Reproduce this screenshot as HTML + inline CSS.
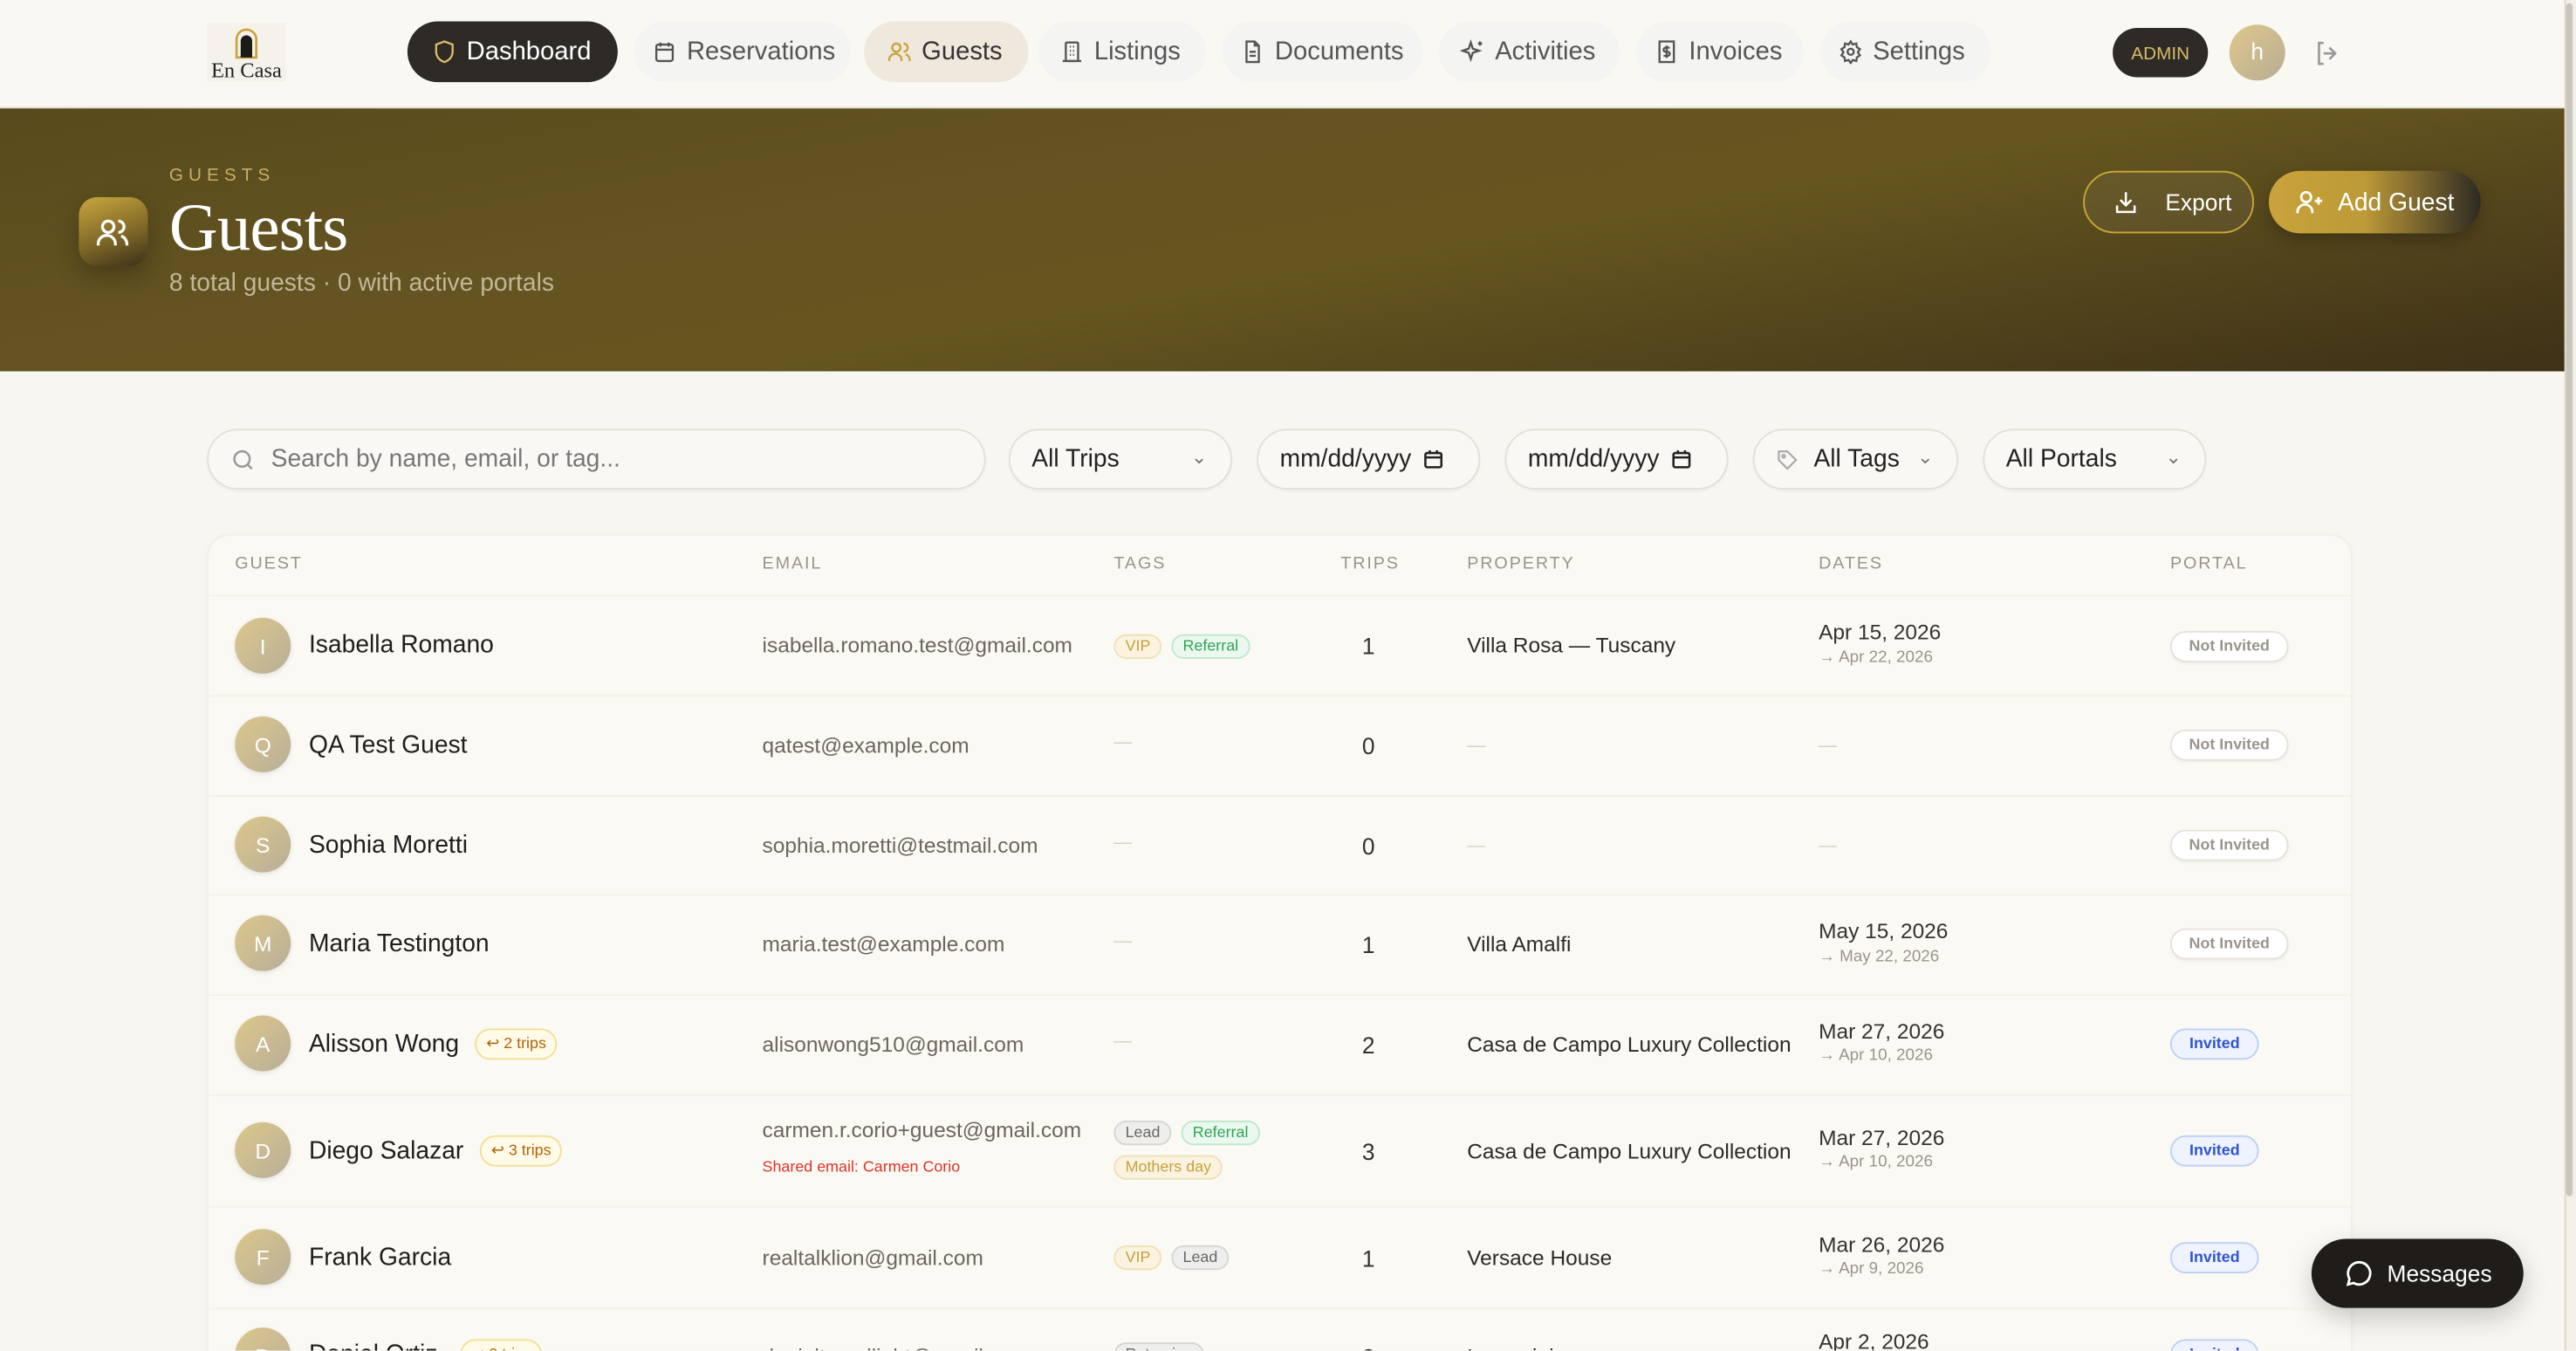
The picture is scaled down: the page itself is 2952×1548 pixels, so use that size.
<!DOCTYPE html>
<html><head><meta charset="utf-8">
<style>
*{box-sizing:border-box;margin:0;padding:0}
html,body{width:2952px;height:1548px;overflow:hidden;background:#f8f6f1}
#w{position:absolute;left:0;top:0;width:1568px;height:822px;transform:scale(1.88265);transform-origin:0 0;font-family:"Liberation Sans",sans-serif;color:#222;background:#f8f6f1;overflow:hidden}
.a{position:absolute}
.nav{left:0;top:0;width:1561px;height:66px;background:#faf8f3;border-bottom:1px solid #e6e0d2}
.pill{position:absolute;top:13px;height:37px;border-radius:19px;background:#f4f4f3;display:flex;align-items:center;padding-left:11px;font-size:15.5px;color:#555;gap:6px}
.pill svg{width:15px;height:15px;flex:none}
.hero{left:0;top:66px;width:1561px;height:160px;background:linear-gradient(170deg,#584a1c 0%,#645421 35%,#65561f 55%,#4f411b 80%,#3d3117 100%)}
.f{position:absolute;top:261px;height:37px;border:1px solid #e4e0d8;border-radius:19px;background:#faf8f4;box-shadow:0 1px 2px rgba(0,0,0,.04);font-size:15px;color:#222;display:flex;align-items:center;padding-left:13px}
.card{left:126px;top:325px;width:1306px;height:520px;background:#fbf9f3;border:1px solid #f2efe7;border-radius:14px;box-shadow:0 1px 4px rgba(0,0,0,.03)}
.th{position:absolute;top:337px;font-size:10.5px;letter-spacing:1px;color:#9a958c}
.row{position:absolute;left:127px;width:1304px;border-top:1px solid #f5f2ea}
.av{position:absolute;left:143px;width:34px;height:34px;border-radius:50%;background:linear-gradient(135deg,#dcc88a,#b8ae9a);color:#fff;font-size:13px;display:flex;align-items:center;justify-content:center;box-shadow:0 1px 3px rgba(0,0,0,.1)}
.nm{position:absolute;left:188px;font-size:15px;color:#1e1e1e}
.em{position:absolute;left:464px;font-size:13px;color:#6b665e}
.tr{position:absolute;left:816px;width:34px;text-align:center;font-size:14px;color:#333}
.pr{position:absolute;left:893px;font-size:13px;color:#2a2a2a}
.d1{position:absolute;left:1107px;font-size:13px;color:#333}
.d2{position:absolute;left:1107px;font-size:10px;color:#9a958c}
.dash{position:absolute;font-size:11px;color:#d4cfc4}
.tag{position:absolute;height:15px;border-radius:8px;font-size:9.5px;padding:0 6px;line-height:13px;border:1px solid}
.vip{background:#fbf3df;border-color:#f0e0b8;color:#c4a23c}
.ref{background:#eaf8ee;border-color:#bfe8cb;color:#2ea456}
.lead{background:#eeeeec;border-color:#d6d6d3;color:#666}
.md{background:#fbf3df;border-color:#f0e0b8;color:#c4a23c}
.ni{position:absolute;left:1321px;width:72px;height:19px;border-radius:10px;background:#fff;border:1px solid #e6e2da;font-size:9.5px;font-weight:bold;color:#9a958c;text-align:center;line-height:17px;box-shadow:0 1px 2px rgba(0,0,0,.05)}
.iv{position:absolute;left:1321px;width:54px;height:19px;border-radius:10px;background:#eef3ff;border:1px solid #bcd0f5;font-size:9.5px;font-weight:bold;color:#2f55d0;text-align:center;line-height:17px}
.trips{position:absolute;height:19px;border-radius:10px;background:#fffbe8;border:1px solid #f3df96;font-size:9.5px;color:#b2620a;padding:0 6px;line-height:17px}
</style></head><body><div id="w">

<div class="a nav"></div>
<div class="a" style="left:126px;top:14px;width:48px;height:36px;background:#f5f2ec"></div>
<svg class="a" style="left:142px;top:16px" width="16" height="20" viewBox="0 0 16 20"><path d="M2 19V8a6 6 0 0 1 12 0v11z" fill="none" stroke="#c9a23a" stroke-width="1.4"/><path d="M4.5 19V9a3.5 3.5 0 0 1 7 0v10z" fill="#1c1a17"/></svg>
<div class="a" style="left:126px;top:35px;width:48px;text-align:center;font-family:'Liberation Serif',serif;font-size:13px;color:#222">En Casa</div>

<div class="pill" style="left:248px;width:128px;background:#2e2a26;color:#fff;padding-left:15px"><svg viewBox="0 0 24 24" fill="none" stroke="#d9bb6a" stroke-width="2"><path d="M12 2l8 3v7c0 5-3.5 8.5-8 10-4.5-1.5-8-5-8-10V5z"/></svg>Dashboard</div>
<div class="pill" style="left:386px;width:132px"><svg viewBox="0 0 24 24" fill="none" stroke="#555" stroke-width="2"><rect x="4" y="5" width="16" height="16" rx="2"/><path d="M4 10h16M8 3v4M16 3v4"/></svg>Reservations</div>
<div class="pill" style="left:526px;width:100px;background:#efe8dc;color:#333;padding-left:14px"><svg viewBox="0 0 24 24" fill="none" stroke="#c9a23a" stroke-width="2"><circle cx="9" cy="8" r="4"/><path d="M2 21v-1a6 6 0 0 1 12 0v1M16 4a4 4 0 0 1 0 8M22 21v-1a6 6 0 0 0-4-5.6"/></svg>Guests</div>
<div class="pill" style="left:632px;width:102px;padding-left:13px"><svg viewBox="0 0 24 24" fill="none" stroke="#555" stroke-width="2"><rect x="6" y="3" width="12" height="18" rx="1"/><path d="M3 21h18M10 7h1M13 7h1M10 11h1M13 11h1M10 15h1M13 15h1"/></svg>Listings</div>
<div class="pill" style="left:744px;width:122px"><svg viewBox="0 0 24 24" fill="none" stroke="#555" stroke-width="2"><path d="M14 2H6v20h12V6z"/><path d="M14 2v4h4M9 12h6M9 16h6"/></svg>Documents</div>
<div class="pill" style="left:876px;width:110px;padding-left:13px"><svg viewBox="0 0 24 24" fill="none" stroke="#555" stroke-width="2"><path d="M10 3l2 6 6 2-6 2-2 6-2-6-6-2 6-2zM19 2v4M17 4h4"/></svg>Activities</div>
<div class="pill" style="left:996px;width:102px"><svg viewBox="0 0 24 24" fill="none" stroke="#555" stroke-width="2"><rect x="5" y="2" width="14" height="20"/><path d="M15 8h-4a2 2 0 0 0 0 4h2a2 2 0 0 1 0 4H9M12 6v12"/></svg>Invoices</div>
<div class="pill" style="left:1108px;width:104px"><svg viewBox="0 0 24 24" fill="none" stroke="#555" stroke-width="2"><circle cx="12" cy="12" r="3"/><path d="M12 2l2 3 3.5-1 .5 3.5 3 2-2 3 2 3-3 2-.5 3.5-3.5-1-2 3-2-3-3.5 1-.5-3.5-3-2 2-3-2-3 3-2L6.5 4 10 5z"/></svg>Settings</div>

<div class="a" style="left:1286px;top:17px;width:58px;height:30px;border-radius:15px;background:#2e2a26;color:#d9bb6a;font-size:11px;text-align:center;line-height:32px">ADMIN</div>
<div class="a" style="left:1357px;top:15px;width:34px;height:34px;border-radius:50%;background:linear-gradient(135deg,#dfc88a,#b8ad95);color:#fff;font-size:14px;text-align:center;line-height:32px">h</div>
<svg class="a" style="left:1408px;top:24px" width="17" height="17" viewBox="0 0 24 24" fill="none" stroke="#999" stroke-width="2"><path d="M9 3H5v18h4M14 7l5 5-5 5M19 12H9"/></svg>

<div class="a hero"></div>
<div class="a" style="left:48px;top:120px;width:42px;height:42px;border-radius:11px;background:linear-gradient(160deg,#c9a73e,#7a6326 60%,#3a301a);box-shadow:0 6px 14px rgba(0,0,0,.25)"></div>
<svg class="a" style="left:58px;top:131px" width="21" height="21" viewBox="0 0 24 24" fill="none" stroke="#fff" stroke-width="2"><circle cx="9" cy="8" r="4"/><path d="M2 21v-1a6 6 0 0 1 12 0v1M16 4a4 4 0 0 1 0 8M22 21v-1a6 6 0 0 0-4-5.6"/></svg>
<div class="a" style="left:103px;top:101px;font-size:11px;letter-spacing:3.2px;color:#c6ae6a">GUESTS</div>
<div class="a" style="left:103px;top:114px;font-family:'Liberation Serif',serif;font-size:41px;color:#fff;letter-spacing:-.5px">Guests</div>
<div class="a" style="left:103px;top:164px;font-size:15px;color:#c2b898">8 total guests · 0 with active portals</div>
<div class="a" style="left:1268px;top:104px;width:104px;height:38px;border-radius:19px;border:1.5px solid #c9a63a;background:rgba(255,255,255,.05);color:#fff;font-size:14px;display:flex;align-items:center;padding-left:17px;gap:16px"><svg width="16" height="16" viewBox="0 0 24 24" fill="none" stroke="#fff" stroke-width="2"><path d="M12 3v12M7 10l5 5 5-5M4 15v6h16v-6"/></svg>Export</div>
<div class="a" style="left:1381px;top:104px;width:129px;height:38px;border-radius:19px;background:linear-gradient(90deg,#c9a33a 0%,#bd9a38 45%,#2e2a22 100%);color:#fff;font-size:15px;display:flex;align-items:center;padding-left:16px;gap:8px;box-shadow:0 4px 10px rgba(0,0,0,.25)"><svg width="18" height="18" viewBox="0 0 24 24" fill="none" stroke="#fff" stroke-width="2"><circle cx="9" cy="8" r="4"/><path d="M2 21v-1a6 6 0 0 1 12 0v1M19 8v6M16 11h6"/></svg>Add Guest</div>

<div class="f" style="left:126px;width:474px;color:#777"><svg width="16" height="16" viewBox="0 0 24 24" fill="none" stroke="#999" stroke-width="2"><circle cx="11" cy="11" r="7"/><path d="M20 20l-4-4"/></svg><span style="margin-left:9px">Search by name, email, or tag...</span></div>
<div class="f" style="left:614px;width:136px">All Trips<span style="position:absolute;right:14px;top:9px;color:#777;font-size:12px">&#8964;</span></div>
<div class="f" style="left:765px;width:136px">mm/dd/yyyy<svg style="margin-left:7px" width="13" height="13" viewBox="0 0 24 24" fill="none" stroke="#222" stroke-width="2.5"><rect x="3" y="5" width="18" height="16" rx="2"/><path d="M3 10h18M8 2v4M16 2v4"/></svg></div>
<div class="f" style="left:916px;width:136px">mm/dd/yyyy<svg style="margin-left:7px" width="13" height="13" viewBox="0 0 24 24" fill="none" stroke="#222" stroke-width="2.5"><rect x="3" y="5" width="18" height="16" rx="2"/><path d="M3 10h18M8 2v4M16 2v4"/></svg></div>
<div class="f" style="left:1067px;width:125px"><svg width="14" height="14" viewBox="0 0 24 24" fill="none" stroke="#aaa" stroke-width="2"><path d="M3 3h9l9 9-9 9-9-9z"/><circle cx="8" cy="8" r="1.5"/></svg><span style="margin-left:9px">All Tags</span><span style="position:absolute;right:14px;top:9px;color:#777;font-size:12px">&#8964;</span></div>
<div class="f" style="left:1207px;width:136px">All Portals<span style="position:absolute;right:14px;top:9px;color:#777;font-size:12px">&#8964;</span></div>

<div class="a card"></div>
<div class="th" style="left:143px">GUEST</div><div class="th" style="left:464px">EMAIL</div><div class="th" style="left:678px">TAGS</div><div class="th" style="left:816px">TRIPS</div><div class="th" style="left:893px">PROPERTY</div><div class="th" style="left:1107px">DATES</div><div class="th" style="left:1321px">PORTAL</div>

<div class="row" style="top:362px"></div><div class="row" style="top:423px"></div><div class="row" style="top:484px"></div><div class="row" style="top:544px"></div><div class="row" style="top:605px"></div><div class="row" style="top:666px"></div><div class="row" style="top:734px"></div><div class="row" style="top:796px"></div>

<div class="av" style="top:376px">I</div><div class="nm" style="top:384px">Isabella Romano</div>
<div class="em" style="top:385px">isabella.romano.test@gmail.com</div>
<div class="tag vip" style="left:678px;top:386px">VIP</div><div class="tag ref" style="left:713px;top:386px">Referral</div>
<div class="tr" style="top:385px">1</div><div class="pr" style="top:385px">Villa Rosa — Tuscany</div>
<div class="d1" style="top:377px">Apr 15, 2026</div><div class="d2" style="top:395px">→ Apr 22, 2026</div>
<div class="ni" style="top:384px">Not Invited</div>

<div class="av" style="top:436px">Q</div><div class="nm" style="top:445px">QA Test Guest</div>
<div class="em" style="top:446px">qatest@example.com</div><div class="dash" style="left:678px;top:446px">—</div>
<div class="tr" style="top:446px">0</div><div class="dash" style="left:893px;top:448px">—</div><div class="dash" style="left:1107px;top:448px">—</div>
<div class="ni" style="top:444px">Not Invited</div>

<div class="av" style="top:497px">S</div><div class="nm" style="top:506px">Sophia Moretti</div>
<div class="em" style="top:507px">sophia.moretti@testmail.com</div><div class="dash" style="left:678px;top:507px">—</div>
<div class="tr" style="top:507px">0</div><div class="dash" style="left:893px;top:509px">—</div><div class="dash" style="left:1107px;top:509px">—</div>
<div class="ni" style="top:505px">Not Invited</div>

<div class="av" style="top:557px">M</div><div class="nm" style="top:566px">Maria Testington</div>
<div class="em" style="top:567px">maria.test@example.com</div><div class="dash" style="left:678px;top:567px">—</div>
<div class="tr" style="top:567px">1</div><div class="pr" style="top:567px">Villa Amalfi</div>
<div class="d1" style="top:559px">May 15, 2026</div><div class="d2" style="top:577px">→ May 22, 2026</div>
<div class="ni" style="top:565px">Not Invited</div>

<div class="av" style="top:618px">A</div><div class="nm" style="top:627px">Alisson Wong</div><div class="trips" style="left:289px;top:626px">↩ 2 trips</div>
<div class="em" style="top:628px">alisonwong510@gmail.com</div><div class="dash" style="left:678px;top:628px">—</div>
<div class="tr" style="top:628px">2</div><div class="pr" style="top:628px">Casa de Campo Luxury Collection</div>
<div class="d1" style="top:620px">Mar 27, 2026</div><div class="d2" style="top:637px">→ Apr 10, 2026</div>
<div class="iv" style="top:626px">Invited</div>

<div class="av" style="top:683px">D</div><div class="nm" style="top:692px">Diego Salazar</div><div class="trips" style="left:292px;top:691px">↩ 3 trips</div>
<div class="em" style="top:680px">carmen.r.corio+guest@gmail.com</div><div class="a" style="left:464px;top:705px;font-size:9.5px;color:#e0322c">Shared email: Carmen Corio</div>
<div class="tag lead" style="left:678px;top:682px">Lead</div><div class="tag ref" style="left:719px;top:682px">Referral</div><div class="tag md" style="left:678px;top:703px">Mothers day</div>
<div class="tr" style="top:693px">3</div><div class="pr" style="top:693px">Casa de Campo Luxury Collection</div>
<div class="d1" style="top:685px">Mar 27, 2026</div><div class="d2" style="top:702px">→ Apr 10, 2026</div>
<div class="iv" style="top:691px">Invited</div>

<div class="av" style="top:748px">F</div><div class="nm" style="top:757px">Frank Garcia</div>
<div class="em" style="top:758px">realtalklion@gmail.com</div>
<div class="tag vip" style="left:678px;top:758px">VIP</div><div class="tag lead" style="left:713px;top:758px">Lead</div>
<div class="tr" style="top:758px">1</div><div class="pr" style="top:758px">Versace House</div>
<div class="d1" style="top:750px">Mar 26, 2026</div><div class="d2" style="top:767px">→ Apr 9, 2026</div>
<div class="iv" style="top:756px">Invited</div>

<div class="av" style="top:808px">D</div><div class="nm" style="top:816px">Daniel Ortiz</div><div class="trips" style="left:280px;top:815px">↩ 2 trips</div>
<div class="em" style="top:818px">danieltravellight@gmail.com</div><div class="tag lead" style="left:678px;top:817px">Returning</div>
<div class="tr" style="top:818px">2</div><div class="pr" style="top:818px">Lorenzini</div>
<div class="d1" style="top:809px">Apr 2, 2026</div><div class="iv" style="top:815px">Invited</div>

<div class="a" style="left:1407px;top:754px;width:129px;height:42px;border-radius:21px;background:#1f1c1a;color:#fff;font-size:14px;display:flex;align-items:center;padding-left:20px;gap:8px;box-shadow:0 6px 16px rgba(0,0,0,.2)"><svg width="18" height="18" viewBox="0 0 24 24" fill="none" stroke="#fff" stroke-width="2"><path d="M12 3a9 9 0 1 1-4.5 16.8L3 21l1.2-4.5A9 9 0 0 1 12 3z"/></svg>Messages</div>

<div class="a" style="left:1561px;top:0;width:7px;height:822px;background:#f3f0ea;border-left:1px solid #e0d6bf"></div>
<div class="a" style="left:1562px;top:2px;width:4px;height:726px;border-radius:2px;background:#c9c6c0"></div>
</div></body></html>
